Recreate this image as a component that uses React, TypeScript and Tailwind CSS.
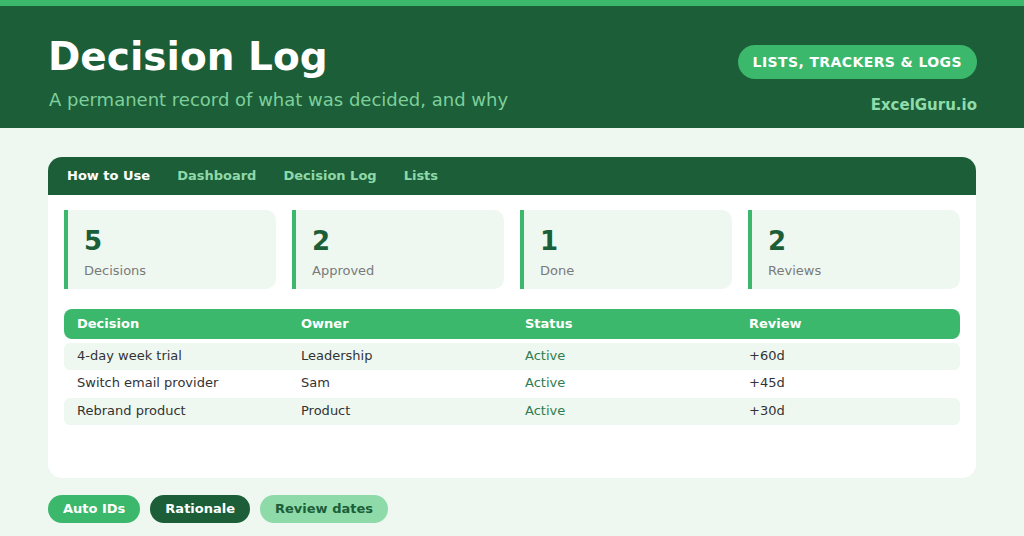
import * as React from 'react';

const stats = [
  { value: '5', label: 'Decisions' },
  { value: '2', label: 'Approved' },
  { value: '1', label: 'Done' },
  { value: '2', label: 'Reviews' },
];

const rows = [
  { decision: '4-day week trial', owner: 'Leadership', status: 'Active', review: '+60d' },
  { decision: 'Switch email provider', owner: 'Sam', status: 'Active', review: '+45d' },
  { decision: 'Rebrand product', owner: 'Product', status: 'Active', review: '+30d' },
];

const tabs = ['How to Use', 'Dashboard', 'Decision Log', 'Lists'];

export default function App() {
  return (
    <main
      className="w-[1024px] h-[536px] overflow-hidden bg-[#eef8f1]"
      style={{ fontFamily: '"DejaVu Sans", Verdana, sans-serif' }}
    >
      <div className="h-[6px] bg-[#3bb86b]" />
      <header className="flex justify-between h-[122px] bg-[#1b5e38] pl-[48px] pr-[47px]">
        <div className="flex flex-col pt-[31px]">
          <h1 className="text-[39px] leading-[40px] font-bold text-white">Decision Log</h1>
          <p className="mt-[9px] pl-[1px] text-[18px] leading-[28px] text-[#7fcf9c]">
            A permanent record of what was decided, and why
          </p>
        </div>
        <div className="flex flex-col items-end pt-[39px]">
          <span className="flex items-center h-[34px] px-[15px] rounded-full bg-[#3bb86b] text-white text-[14px] font-bold tracking-[0.4px]">
            LISTS, TRACKERS &amp; LOGS
          </span>
          <span className="mt-[16px] text-[15px] leading-[20px] font-bold text-[#8fdcaa]">ExcelGuru.io</span>
        </div>
      </header>

      <section className="mx-[48px] mt-[29px] h-[321px] rounded-[14px] bg-white overflow-hidden">
        <nav className="flex items-center gap-[27px] h-[38px] pl-[19px] bg-[#1b5e38]">
          {tabs.map((t, i) => (
            <span
              key={t}
              className={i === 0 ? 'text-[13px] font-bold text-white' : 'text-[13px] font-bold text-[#8fd9a8]'}
            >
              {t}
            </span>
          ))}
        </nav>
        <div className="px-4 pt-[15px]">
          <div className="grid grid-cols-4 gap-4">
            {stats.map((s) => (
              <div
                key={s.label}
                className="h-[79px] border-l-4 border-[#3bb86b] bg-[#eef8f1] rounded-r-[10px] pl-4 pt-[16px]"
              >
                <div className="text-[26px] leading-[30px] font-bold text-[#1b5e38]">{s.value}</div>
                <div className="mt-[6px] text-[13px] leading-[18px] text-[#7a7a7a]">{s.label}</div>
              </div>
            ))}
          </div>

          <div className="mt-[20px]">
            <div className="grid grid-cols-4 h-[30px] items-center rounded-[8px] bg-[#3bb86b] text-white text-[13px] font-bold">
              <span className="px-[13px]">Decision</span>
              <span className="px-[13px]">Owner</span>
              <span className="px-[13px]">Status</span>
              <span className="px-[13px]">Review</span>
            </div>
            <div className="mt-[4px] flex flex-col">
              {rows.map((r, i) => (
                <div
                  key={r.decision}
                  className={
                    i % 2 === 0
                      ? 'grid grid-cols-4 h-[27px] items-center rounded-[6px] bg-[#eef8f1] text-[13px] leading-[16px] text-[#333333] pb-[2px]'
                      : 'grid grid-cols-4 h-[28px] items-center text-[13px] leading-[16px] text-[#333333] pb-[2px]'
                  }
                >
                  <span className="px-[13px]">{r.decision}</span>
                  <span className="px-[13px]">{r.owner}</span>
                  <span className="px-[13px] text-[#2e7d4f]">{r.status}</span>
                  <span className="px-[13px]">{r.review}</span>
                </div>
              ))}
            </div>
          </div>
        </div>
      </section>

      <div className="flex gap-[10px] mx-[48px] mt-[17px]">
        <span className="flex items-center h-[28px] px-[15px] rounded-full bg-[#3bb86b] text-white text-[13px] font-bold">
          Auto IDs
        </span>
        <span className="flex items-center h-[28px] px-[15px] rounded-full bg-[#1b5e38] text-white text-[13px] font-bold">
          Rationale
        </span>
        <span className="flex items-center h-[28px] px-[15px] rounded-full bg-[#8edaa9] text-[#1b5e38] text-[13px] font-bold">
          Review dates
        </span>
      </div>
    </main>
  );
}
